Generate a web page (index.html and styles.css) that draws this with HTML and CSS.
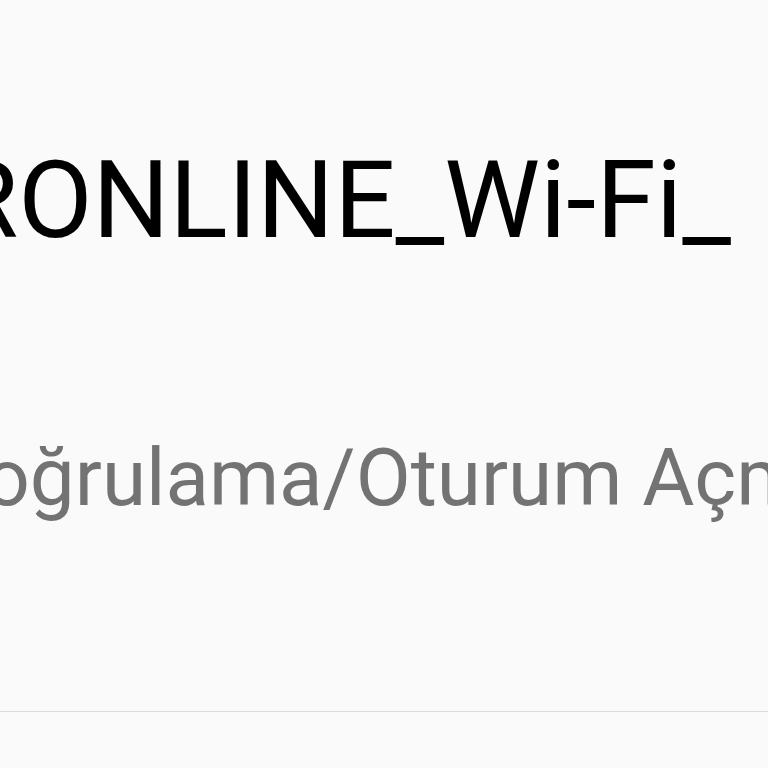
FILE: index.html
```html
<!DOCTYPE html>
<html lang="tr">
<head>
<meta charset="utf-8">
<link rel="stylesheet" href="styles.css">
</head>
<body>
<div class="screen">
  <div class="item">
    <div class="title"><span class="shift">SUPERONLINE_Wi-Fi_</span></div>
    <div class="subtitle"><span class="shift2">Kimlik doğrulama/Oturum Açma gerekli</span></div>
  </div>
  <div class="divider"></div>
</div>
</body>
</html>
```
FILE: styles.css
```css
html, body {
  margin: 0;
  padding: 0;
  background: #fafafa;
}
.screen {
  width: 768px;
  height: 768px;
  overflow: hidden;
  background: #fafafa;
  display: flex;
  flex-direction: column;
}
.item {
  height: 711px;
  display: flex;
  flex-direction: column;
  overflow: hidden;
}
.title {
  font-family: Roboto, "Noto Sans", sans-serif;
  font-size: 108px;
  line-height: 1;
  color: #000;
  white-space: nowrap;
  margin-top: 146px;
}
.shift {
  display: inline-block;
  margin-left: -312px;
}
.subtitle {
  font-family: Roboto, "Noto Sans", sans-serif;
  font-size: 80px;
  line-height: 1;
  color: #737373;
  white-space: nowrap;
  margin-top: 184px;
}
.shift2 {
  display: inline-block;
  margin-left: -300px;
}
.divider {
  height: 1px;
  background: #dcdcdc;
}
```
